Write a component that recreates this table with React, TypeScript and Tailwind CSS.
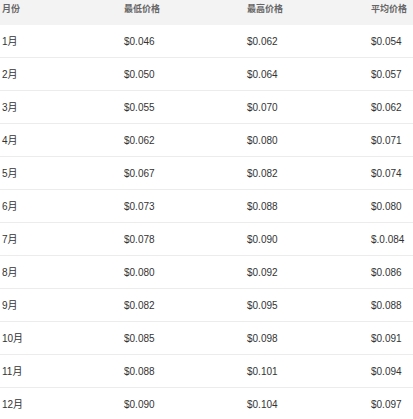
const rows = [
  ["1月", "$0.046", "$0.062", "$0.054"],
  ["2月", "$0.050", "$0.064", "$0.057"],
  ["3月", "$0.055", "$0.070", "$0.062"],
  ["4月", "$0.062", "$0.080", "$0.071"],
  ["5月", "$0.067", "$0.082", "$0.074"],
  ["6月", "$0.073", "$0.088", "$0.080"],
  ["7月", "$0.078", "$0.090", "$.0.084"],
  ["8月", "$0.080", "$0.092", "$0.086"],
  ["9月", "$0.082", "$0.095", "$0.088"],
  ["10月", "$0.085", "$0.098", "$0.091"],
  ["11月", "$0.088", "$0.101", "$0.094"],
  ["12月", "$0.090", "$0.104", "$0.097"],
];

const cols = "grid grid-cols-[122px_123px_124px_123px] pl-[2px]";

export default function App() {
  return (
    <div className="w-[413px] h-[419px] overflow-hidden bg-white font-['Liberation_Sans','Noto_Sans_CJK_SC',sans-serif]">
      <div className="w-[494px]">
        {/* header */}
        <div className={`${cols} bg-[#f3f3f3] h-[25px] pt-[1px] text-[9px] leading-[16px] font-semibold text-[#666]`}>
          <div>月份</div>
          <div>最低价格</div>
          <div>最高价格</div>
          <div>平均价格</div>
        </div>

        {rows.map((r) => (
          <div
            key={r[0]}
            className={`${cols} h-[33px] items-center border-b border-[#ececec] text-[10px] text-[#333]`}
          >
            {r.map((c, i) => (
              <div key={i}>{c}</div>
            ))}
          </div>
        ))}
      </div>
    </div>
  );
}
